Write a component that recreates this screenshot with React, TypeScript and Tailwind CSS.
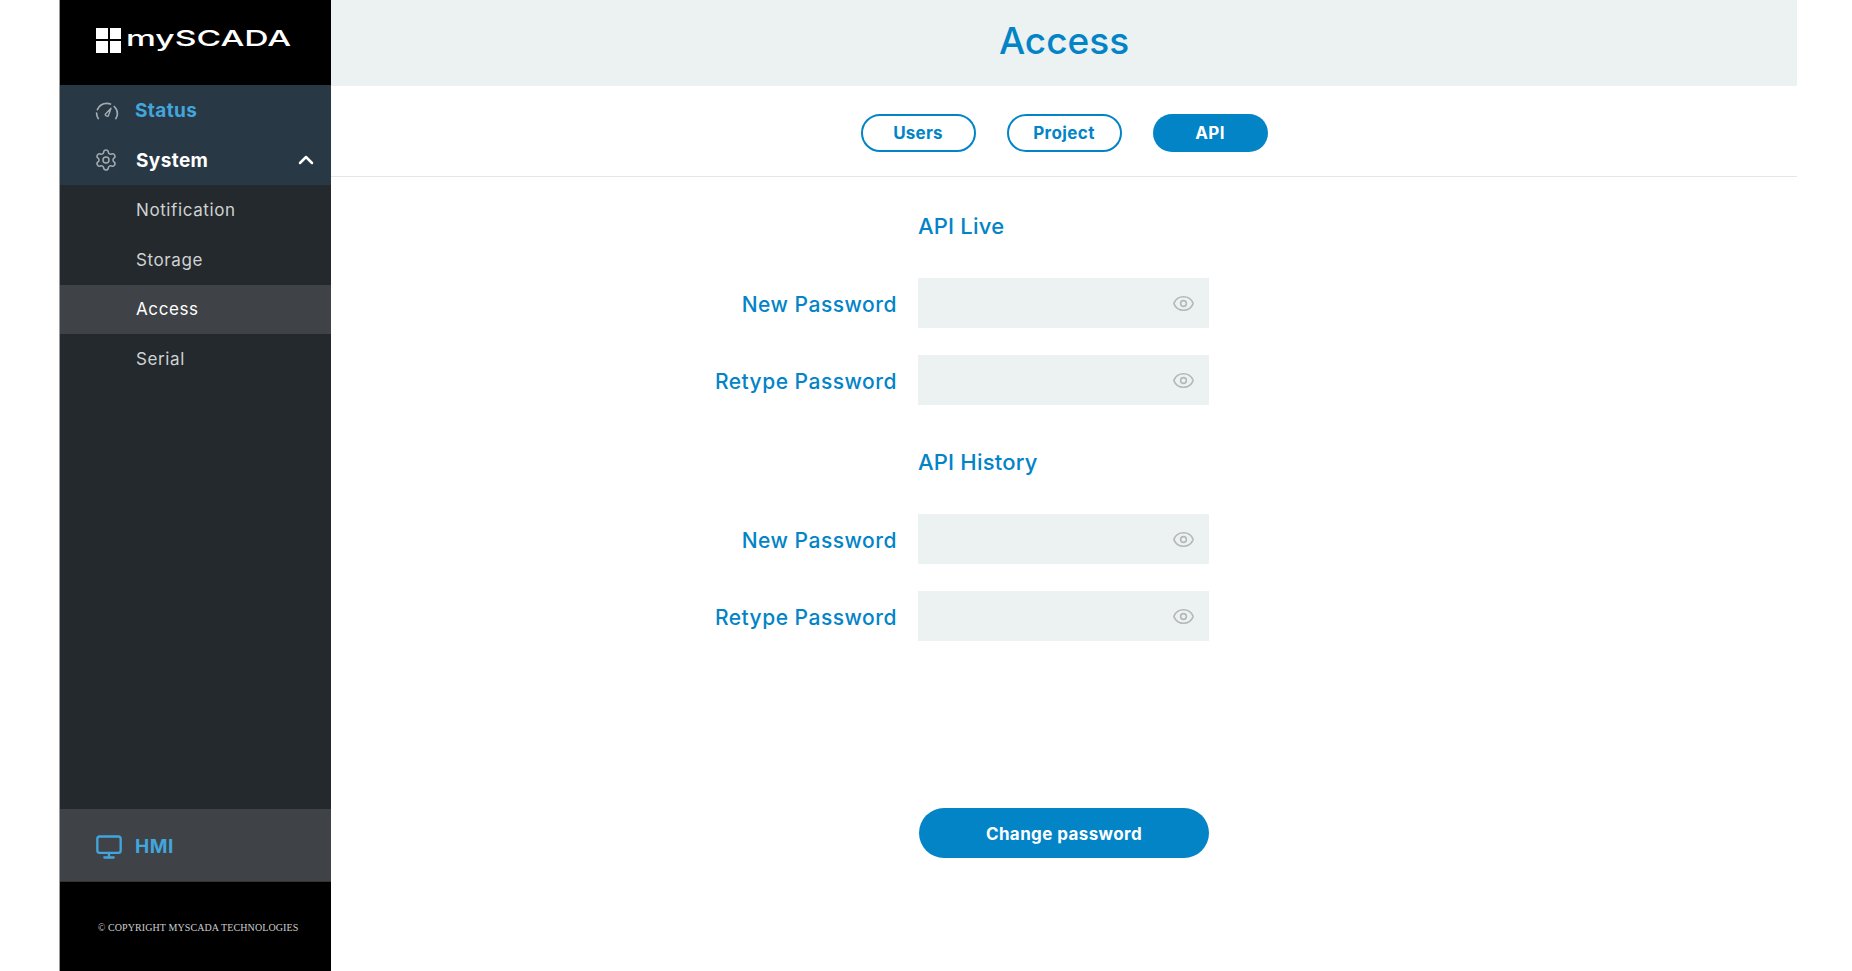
import React from 'react';
import { ChevronUp, Eye, Monitor, Settings } from 'lucide-react';

const subItems = [
  { name: 'Notification', rowClass: 'h-[50px] pt-[2px] text-[#cfd1d2]' },
  { name: 'Storage', rowClass: 'h-[50px] pt-[2px] text-[#cfd1d2]' },
  { name: 'Access', rowClass: 'h-[49px] bg-[#3f4347] text-white' },
  { name: 'Serial', rowClass: 'h-[50px] pt-[2px] text-[#cfd1d2]' },
];

const GaugeIcon = () => (
  <svg width="24" height="24" viewBox="0 0 24 24" fill="none" stroke="#a3abb1" strokeWidth="1.7" strokeLinecap="round">
    <path d="M3.2 19.5c-1-1.5-1.6-3.4-1.6-5.4" />
    <path d="M2.4 10.6C3.9 7 7.6 4.3 11.9 4.3c1.3 0 2.5.2 3.6.7" />
    <path d="M19.2 7.5c2 1.9 3.2 4.5 3.2 7 0 1.9-.5 3.6-1.5 5" />
    <path d="M10.3 15.2 16 9.2l-2.6 7.6c-.7 1.1-3.8-.4-3.1-1.6z" strokeWidth="1.4" strokeLinejoin="round" />
  </svg>
);

const PasswordField: React.FC<{ label: string }> = ({ label }) => (
  <div className="flex items-center h-[50px]">
    <label className="w-[292px] pr-[21px] pt-[2px] text-right text-[21px] font-medium tracking-[0.5px] text-[#0284c7] leading-none">{label}</label>
    <div className="w-[291px] h-[50px] bg-[#ecf1f1] flex items-center justify-end pr-[14px]">
      <Eye size={23} strokeWidth={1.7} className="text-[#b4b8b8]" />
    </div>
  </div>
);

const Section: React.FC<{ title: string }> = ({ title }) => (
  <div className="flex flex-col">
    <div className="h-[67px] pl-[292px] text-[22px] font-medium tracking-[0.2px] text-[#0284c7] leading-[30px]">{title}</div>
    <div className="flex flex-col gap-[27px]">
      <PasswordField label="New Password" />
      <PasswordField label="Retype Password" />
    </div>
  </div>
);

const App: React.FC = () => {
  return (
    <div className="flex h-[971px] pl-[59px] bg-white overflow-hidden font-['Inter',sans-serif]">
      <aside className="w-[272px] flex flex-col bg-[#24292d] border-l border-[#9a9a9a]">
        <div className="h-[85px] bg-black flex items-center pl-[36px] pb-[5px]">
          <div className="grid grid-cols-2 gap-[2px] w-[25px] h-[25px] shrink-0">
            <span className="bg-white" /><span className="bg-white" /><span className="bg-white" /><span className="bg-white" />
          </div>
          <span className="ml-[5px] mb-[5px] text-white text-[22px] font-medium leading-none origin-left scale-x-[1.53]">mySCADA</span>
        </div>
        <div className="h-[50px] bg-[#293845] flex items-center pl-[35px] pt-[2px]">
          <GaugeIcon />
          <span className="ml-[16px] text-[19px] font-bold tracking-[0.4px] text-[#42a5dc]">Status</span>
        </div>
        <div className="h-[50px] bg-[#293845] flex items-center pl-[34px] pr-[13px] pt-[2px]">
          <Settings size={24} strokeWidth={1.5} className="text-[#a3abb1] -mt-[2px]" />
          <span className="ml-[18px] text-[19px] font-bold tracking-[0.4px] text-white flex-1">System</span>
          <ChevronUp size={24} strokeWidth={2.5} className="text-white -mt-[2px]" />
        </div>
        {subItems.map((item) => (
          <div key={item.name} className={`flex items-center pl-[76px] text-[17px] tracking-[0.6px] ${item.rowClass}`}>
            {item.name}
          </div>
        ))}
        <div className="flex-1" />
        <div className="h-[72px] bg-[#3f4347] flex items-center pl-[35px] pt-[4px]">
          <Monitor size={28} strokeWidth={2} className="text-[#42a5dc]" />
          <span className="ml-[12px] text-[19px] font-bold tracking-[0.6px] text-[#42a5dc]">HMI</span>
        </div>
        <div className="h-[90px] bg-black border-t border-[#333333] flex items-center justify-center pl-[5px] pt-[1px] text-[10px] tracking-[0.1px] text-[#cfcfcf] font-['Liberation_Serif',serif]">
          © COPYRIGHT MYSCADA TECHNOLOGIES
        </div>
      </aside>
      <main className="w-[1466px] flex flex-col">
        <div className="h-[86px] bg-[#ecf1f1] flex items-center justify-center pb-[4px] text-[37px] font-medium text-[#0284c7]">Access</div>
        <div className="h-[91px] pt-[4px] border-b border-[#e5e7e7] flex items-center justify-center gap-[31px]">
          <button className="w-[115px] h-[38px] pt-[1px] rounded-full border-2 border-[#0284c7] text-[17px] font-bold tracking-[0.2px] text-[#0284c7]">Users</button>
          <button className="w-[115px] h-[38px] pt-[1px] rounded-full border-2 border-[#0284c7] text-[17px] font-bold tracking-[0.4px] text-[#0284c7]">Project</button>
          <button className="w-[115px] h-[38px] pt-[1px] rounded-full bg-[#0284c7] text-[17px] font-bold tracking-[0.4px] text-white">API</button>
        </div>
        <div className="flex flex-col items-start pl-[295px] pt-[34px]">
          <div className="flex flex-col gap-[42px]">
            <Section title="API Live" />
            <Section title="API History" />
          </div>
          <button className="mt-[167px] ml-[293px] w-[290px] h-[50px] pt-[4px] rounded-full bg-[#0284c7] text-[17px] font-bold tracking-[0.4px] text-white">Change password</button>
        </div>
      </main>
    </div>
  );
};

export default App;
